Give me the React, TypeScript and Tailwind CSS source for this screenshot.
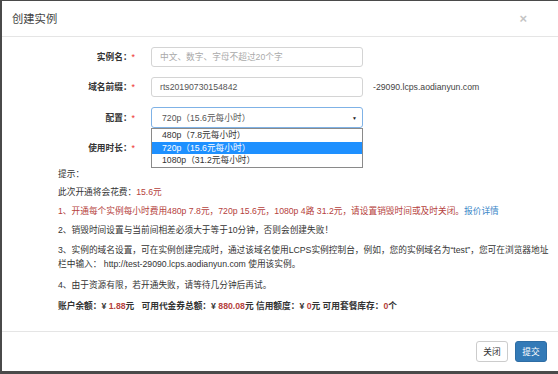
const font = { fontFamily: '"Liberation Sans", "Noto Sans CJK SC", sans-serif' }

function Label({ text }: { text: string }) {
  return (
    <div className="w-[133px] shrink-0 text-right font-bold text-[#333]">
      {text}：<span className="text-[#e33] font-normal">*</span>
    </div>
  )
}

export default function App() {
  return (
    <div
      style={font}
      className="w-[558px] h-[374px] bg-white border-l-2 border-t border-b-[3px] border-[#4a4a4a] flex flex-col text-[8.7px] leading-[14px] text-[#333] overflow-hidden"
    >
      {/* Header */}
      <div className="h-[36px] shrink-0 border-b border-[#e5e5e5] flex items-center justify-between pl-[10px] pr-[31px]">
        <h4 className="text-[11.3px] text-[#444]">创建实例</h4>
        <span className="text-[13px] font-bold text-[#c4c4c4]">×</span>
      </div>

      {/* Body */}
      <div className="flex-1 pt-[10px]">
        <div className="flex flex-col gap-[10px]">
          <div className="flex items-center h-[20px]">
            <Label text="实例名" />
            <input
              className="ml-[16px] w-[212px] h-[20px] border border-[#d4d4d4] rounded-[3px] px-[8px] text-[8.7px] placeholder:text-[#aaa] outline-none"
              placeholder="中文、数字、字母不超过20个字"
            />
          </div>
          <div className="flex items-center h-[20px]">
            <Label text="域名前缀" />
            <div className="ml-[16px] w-[212px] h-[20px] border border-[#d4d4d4] rounded-[3px] px-[8px] flex items-center text-[#555]">
              rts20190730154842
            </div>
            <span className="ml-[10px] text-[#444]">-29090.lcps.aodianyun.com</span>
          </div>
          <div className="flex items-center h-[21px]">
            <Label text="配置" />
            <div className="relative ml-[16px] w-[212px] h-[21px]">
              <div className="h-full border border-[#7fb2e6] rounded-[3px] pl-[10px] pr-[5px] flex items-center justify-between text-[#555]">
                <span>720p（15.6元每小时）</span>
                <span className="text-[5px] text-[#222]">▼</span>
              </div>
              {/* open dropdown */}
              <div className="absolute left-0 top-[21px] w-[212px] bg-white border border-[#8a8a8a] z-10">
                <div className="h-[12.5px] flex items-center pl-[10px] text-[#333]">480p（7.8元每小时）</div>
                <div className="h-[12.5px] flex items-center pl-[10px] bg-[#1e90ff] text-white">720p（15.6元每小时）</div>
                <div className="h-[12.5px] flex items-center pl-[10px] text-[#333]">1080p（31.2元每小时）</div>
              </div>
            </div>
          </div>
          <div className="flex items-center h-[20px]">
            <Label text="使用时长" />
          </div>
        </div>

        {/* Hints */}
        <div className="pl-[56px] pr-[4px] mt-[9px]">
          <p>提示：</p>
          <p className="mt-[4px]">
            此次开通将会花费：<span className="text-[#b5413c]">15.6元</span>
          </p>
          <p className="mt-[5px] text-[#b5413c]">
            1、开通每个实例每小时费用480p 7.8元，720p 15.6元，1080p 4路 31.2元，请设置销毁时间或及时关闭。
            <span className="text-[#3a87c8]">报价详情</span>
          </p>
          <p className="mt-[5px]">2、销毁时间设置与当前间相差必须大于等于10分钟，否则会创建失败！</p>
          <p className="mt-[6px] whitespace-nowrap">
            3、实例的域名设置，可在实例创建完成时，通过该域名使用LCPS实例控制台，例如，您的实例域名为“test”，您可在浏览器地址
            <br />
            栏中输入： http://test-29090.lcps.aodianyun.com 使用该实例。
          </p>
          <p className="mt-[7px]">4、由于资源有限，若开通失败，请等待几分钟后再试。</p>
          <p className="mt-[7px] font-bold whitespace-pre">
            账户余额：¥ <span className="text-[#b5413c]">1.88</span>元   可用代金券总额：¥ <span className="text-[#b5413c]">880.08</span>元 信用额度：¥ <span className="text-[#b5413c]">0</span>元 可用套餐库存：<span className="text-[#b5413c]">0</span>个
          </p>
        </div>
      </div>

      {/* Footer */}
      <div className="h-[40px] shrink-0 border-t border-[#e5e5e5] flex items-center justify-end gap-[7px] pr-[11px]">
        <button className="w-[32px] h-[21px] border border-[#ccc] rounded-[3px] bg-white text-[#333] text-[8.7px]">
          关闭
        </button>
        <button className="w-[32px] h-[21px] border border-[#2e6da4] rounded-[3px] bg-[#337ab7] text-white text-[8.7px]">
          提交
        </button>
      </div>
    </div>
  )
}
